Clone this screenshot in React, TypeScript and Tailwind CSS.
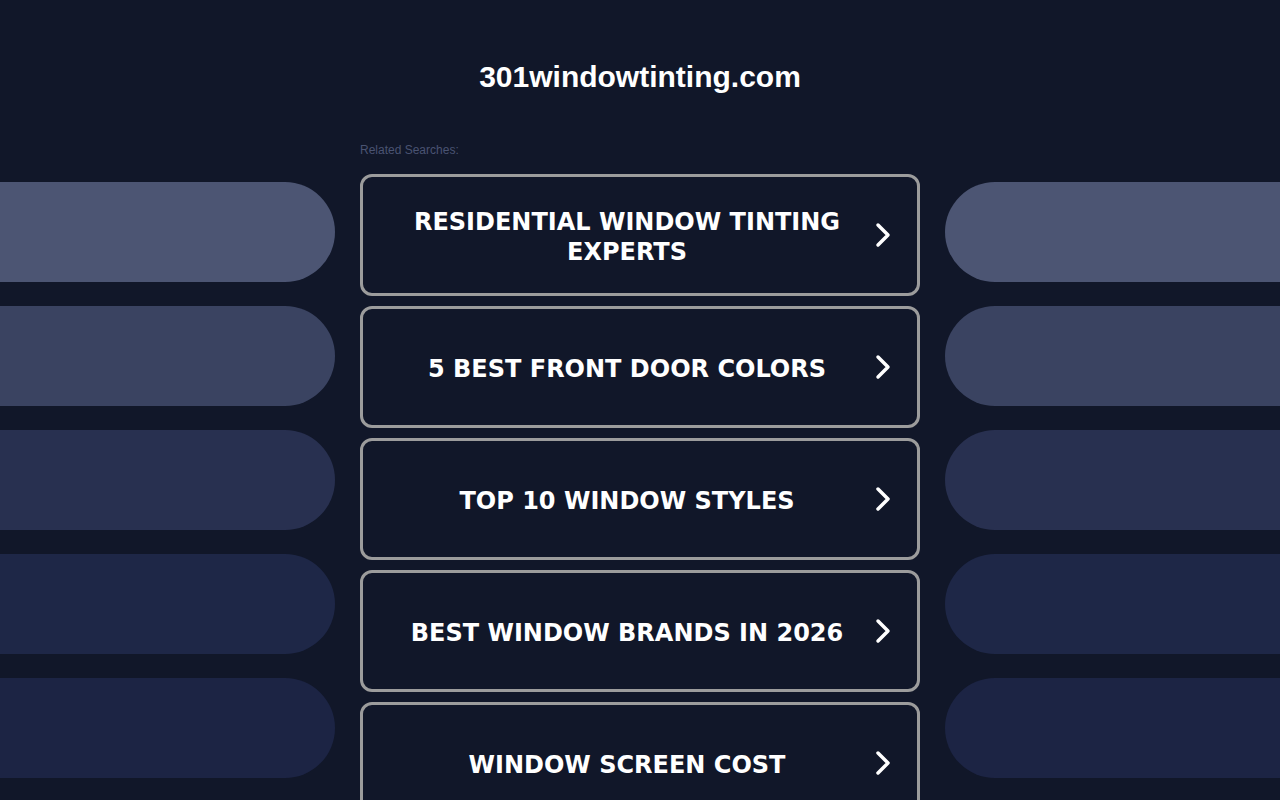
import React from 'react';

const searches = [
  'Residential Window Tinting Experts',
  '5 Best Front Door Colors',
  'Top 10 Window Styles',
  'Best Window Brands in 2026',
  'Window Screen Cost',
];

// side decoration bars, lightest on top
const pillColors = ['bg-[#4c5573]', 'bg-[#3a4361]', 'bg-[#283050]', 'bg-[#1e2747]', 'bg-[#1c2444]'];

const Chevron = () => (
  <svg width="18" height="28" viewBox="0 0 18 28" className="shrink-0">
    <polyline
      points="4,4 14,14 4,24"
      fill="none"
      stroke="#ffffff"
      strokeWidth="3.5"
      strokeLinecap="round"
      strokeLinejoin="round"
    />
  </svg>
);

const SideColumn: React.FC<{ side: 'left' | 'right' }> = ({ side }) => (
  <div className="w-[335px] shrink-0 overflow-hidden pt-[62px] flex flex-col gap-[24px]">
    {pillColors.map((c) => (
      <div
        key={c}
        className={`h-[100px] w-full shrink-0 ${c} ${side === 'left' ? 'rounded-r-[50px]' : 'rounded-l-[50px]'}`}
      />
    ))}
  </div>
);

export default function App() {
  return (
    <div className="h-[800px] overflow-hidden bg-[#111729] flex flex-col">
      <div className="h-[120px] shrink-0 pt-[58px] text-center">
        <h1 className="text-[30px] leading-[38px] font-bold text-white font-['Liberation_Sans',Arial,sans-serif]">
          301windowtinting.com
        </h1>
      </div>
      <div className="flex gap-[25px] shrink-0">
        <SideColumn side="left" />
        <div className="w-[560px] shrink-0">
          <div className="pt-[23px] h-[54px] text-[12px] leading-[14px] text-[#4a5372] font-['Liberation_Sans',Arial,sans-serif]">
            Related Searches:
          </div>
          <div className="flex flex-col gap-[10px]">
            {searches.map((s) => (
              <a
                key={s}
                href="#"
                className="h-[122px] shrink-0 border-[3px] border-[#9c9c9c] rounded-[12px] flex items-center pl-[20px] pr-[22px]"
              >
                <span className="flex-1 pt-[4px] text-center uppercase text-white font-bold text-[24px] leading-[30px] font-['DejaVu_Sans',Verdana,sans-serif]">
                  {s}
                </span>
                <span className="w-[24px] flex justify-center">
                  <Chevron />
                </span>
              </a>
            ))}
          </div>
        </div>
        <SideColumn side="right" />
      </div>
    </div>
  );
}
